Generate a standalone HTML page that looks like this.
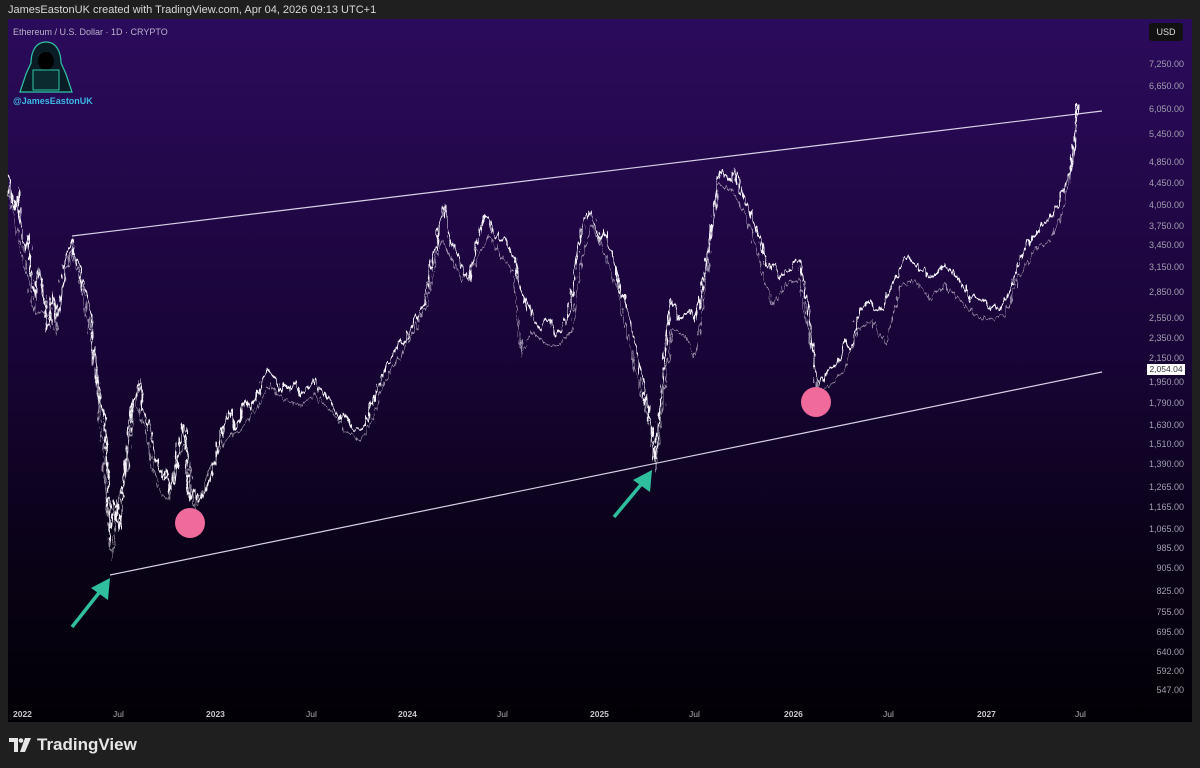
<!DOCTYPE html>
<html><head><meta charset="utf-8"><style>
html,body{margin:0;padding:0;width:1200px;height:768px;background:#1f1f1f;overflow:hidden;font-family:"Liberation Sans",sans-serif}
.hdr{position:absolute;left:8px;top:4px;font-size:11px;color:#d8d8d8}
.panel{position:absolute;left:8px;top:19px;width:1184px;height:703px;background:linear-gradient(180deg,#2b0b5c 0%,#220748 25%,#170434 50%,#0a0218 75%,#020005 100%)}
.t{position:absolute;font-size:9px;color:#b9b2c8}
.pl{position:absolute;right:8px;font-size:9px;color:#a39fb0;text-align:right;width:60px}
.xl{position:absolute;top:690px;font-size:8.5px;color:#b0b0b0}
.xl.b{font-weight:bold;color:#c8c8c8}
.foot{position:absolute;left:9px;top:735px;font-size:17px;color:#e6e6e6;font-weight:bold;display:flex;align-items:center;gap:6px}
</style></head><body>
<div class="hdr">JamesEastonUK created with TradingView.com, Apr 04, 2026 09:13 UTC+1</div>
<div class="panel">
<div class="t" style="left:5px;top:8px">Ethereum / U.S. Dollar · 1D · CRYPTO</div>
<svg style="position:absolute;left:8px;top:21px" width="60" height="56" viewBox="0 0 60 56">
<path d="M30 2 C19 2 15 13 15 23 L10 34 L4 52 L56 52 L50 34 L45 23 C45 13 41 2 30 2Z" fill="#0a1c26" stroke="#2fc7a8" stroke-width="1.2"/>
<ellipse cx="30" cy="21" rx="8" ry="9" fill="#000"/>
<rect x="17" y="30" width="26" height="20" fill="#0b2a30" stroke="#2fc7a8" stroke-width="1"/>
</svg>
<div style="position:absolute;left:5px;top:77px;font-size:9px;font-weight:bold;color:#3fb7e6">@JamesEastonUK</div>
<div style="position:absolute;left:1141px;top:4px;width:34px;height:18px;background:#111;border-radius:3px;color:#ddd;font-size:9px;line-height:18px;text-align:center">USD</div>
<div class="pl" style="top:40px">7,250.00</div><div class="pl" style="top:62px">6,650.00</div><div class="pl" style="top:85px">6,050.00</div><div class="pl" style="top:110px">5,450.00</div><div class="pl" style="top:138px">4,850.00</div><div class="pl" style="top:159px">4,450.00</div><div class="pl" style="top:181px">4,050.00</div><div class="pl" style="top:202px">3,750.00</div><div class="pl" style="top:221px">3,450.00</div><div class="pl" style="top:243px">3,150.00</div><div class="pl" style="top:268px">2,850.00</div><div class="pl" style="top:294px">2,550.00</div><div class="pl" style="top:314px">2,350.00</div><div class="pl" style="top:334px">2,150.00</div><div class="pl" style="top:358px">1,950.00</div><div class="pl" style="top:379px">1,790.00</div><div class="pl" style="top:401px">1,630.00</div><div class="pl" style="top:420px">1,510.00</div><div class="pl" style="top:440px">1,390.00</div><div class="pl" style="top:463px">1,265.00</div><div class="pl" style="top:483px">1,165.00</div><div class="pl" style="top:505px">1,065.00</div><div class="pl" style="top:524px">985.00</div><div class="pl" style="top:544px">905.00</div><div class="pl" style="top:567px">825.00</div><div class="pl" style="top:588px">755.00</div><div class="pl" style="top:608px">695.00</div><div class="pl" style="top:628px">640.00</div><div class="pl" style="top:647px">592.00</div><div class="pl" style="top:666px">547.00</div>
<div style="position:absolute;left:1139px;top:345px;width:38px;height:11px;background:#fff;color:#333;font-size:8.5px;line-height:11px;text-align:center">2,054.04</div>
<div class="xl b" style="left:5px">2022</div><div class="xl" style="left:105px">Jul</div><div class="xl b" style="left:198px">2023</div><div class="xl" style="left:298px">Jul</div><div class="xl b" style="left:390px">2024</div><div class="xl" style="left:489px">Jul</div><div class="xl b" style="left:582px">2025</div><div class="xl" style="left:681px">Jul</div><div class="xl b" style="left:776px">2026</div><div class="xl" style="left:875px">Jul</div><div class="xl b" style="left:969px">2027</div><div class="xl" style="left:1067px">Jul</div>
</div>
<svg style="position:absolute;left:0;top:0" width="1200" height="768">
<defs><filter id="j" x="-5%" y="-10%" width="110%" height="120%"><feTurbulence type="fractalNoise" baseFrequency="0.35 0.08" numOctaves="2" seed="3"/><feDisplacementMap in="SourceGraphic" scale="9" xChannelSelector="R" yChannelSelector="G"/></filter></defs>
<line x1="72" y1="236" x2="1102" y2="111" stroke="#d8d0e6" stroke-width="1.2"/>
<line x1="110" y1="575" x2="1102" y2="372" stroke="#d8d0e6" stroke-width="1.2"/>
<g fill="none" stroke="#f4f2f8" stroke-linejoin="round" filter="url(#j)">
<polyline stroke-width="1.6" points="8,175 12,200 15,210 18,190 22,240 25,250 28,235 32,280 35,300 38,270 40,275 44,300 47,330 50,320 53,290 56,320 60,300 63,280 65,260 68,250 72,240 75,255 80,270 84,290 88,300 90,310 93,350 95,360 98,380 100,400 103,410 105,420 108,480 110,540 113,510 115,500 118,520 120,530 123,490 125,470 128,440 130,420 134,400 137,390 140,380 143,410 147,420 150,430 154,450 157,460 160,470 164,480 167,470 170,490 174,480 177,460 180,440 183,425 185,430 188,480 190,500 194,490 197,500 200,500 205,490 210,480 215,460 220,440 225,420 230,410 235,430 240,420 245,400 250,410 255,400 260,390 265,375 270,370 275,380 280,390 285,385 290,390 295,380 300,395 305,390 310,385 315,380 320,390 325,395 330,400 335,410 340,420 345,415 350,425 355,430 360,430 365,425 370,410 375,395 380,380 385,370 390,360 395,350 400,340 405,345 410,330 415,320 420,310 425,300 430,270 435,250 440,220 443,205 445,210 448,230 450,240 455,250 460,260 465,275 470,280 475,250 480,230 485,215 490,220 495,235 500,240 505,238 510,250 515,260 520,290 525,300 530,310 535,320 540,330 545,320 550,320 555,335 560,330 565,320 570,310 575,270 580,240 585,220 590,210 595,225 600,240 605,230 610,250 615,265 620,290 625,300 630,320 635,340 640,370 643,380 645,400 648,410 650,420 653,440 655,460 658,430 660,410 663,380 665,350 668,320 670,300 675,305 680,320 685,315 690,310 695,320 700,300 705,270 710,240 715,200 720,170 725,175 730,180 735,170 740,190 745,200 750,210 755,225 760,240 765,260 770,270 775,265 780,280 785,270 790,270 795,260 800,260 805,290 810,320 813,350 815,370 818,380 820,385 825,375 830,370 835,365 840,360 845,340 850,350 855,330 860,310 865,305 870,300 875,310 880,310 885,300 890,290 895,280 900,270 905,255 910,260 915,265 920,270 925,270 930,280 935,275 940,270 945,265 950,270 955,275 960,280 965,290 970,300 975,295 980,300 985,300 990,310 995,305 1000,310 1005,300 1010,290 1015,275 1020,260 1025,250 1030,240 1035,235 1040,230 1045,220 1050,220 1055,210 1060,200 1065,185 1070,170 1073,150 1075,130 1077,110 1078,105"/>
<polyline stroke-width="1" opacity="0.6" points="8,190 15,225 25,265 35,315 45,310 55,335 65,275 72,250 82,290 92,345 100,410 108,520 112,560 118,500 125,480 135,395 145,430 158,490 168,500 178,455 186,445 195,510 210,470 225,440 240,430 255,410 270,385 285,400 300,405 315,395 330,410 345,430 360,440 372,420 385,380 400,355 415,330 428,300 440,240 450,255 462,280 475,265 488,235 500,255 512,270 522,355 532,330 545,345 560,345 572,330 582,255 592,225 605,255 618,290 630,345 642,395 650,430 656,470 664,395 672,330 685,335 695,360 705,285 718,185 732,190 745,215 758,255 772,305 785,285 800,280 812,350 818,395 830,385 845,370 858,330 872,320 886,345 900,285 915,280 930,300 945,285 960,300 975,315 990,320 1005,315 1020,275 1035,250 1050,240 1062,215 1072,165 1077,125"/>
</g>
<circle cx="190" cy="523" r="15" fill="#f06a9c"/>
<circle cx="816" cy="402" r="15" fill="#f06a9c"/>
<g fill="#2fbf9f">
<line x1="72" y1="627" x2="102" y2="589" stroke="#2fbf9f" stroke-width="3.5"/>
<polygon points="110,578 108,600 91,588"/>
<line x1="614" y1="517" x2="644" y2="481" stroke="#2fbf9f" stroke-width="3.5"/>
<polygon points="652,470 650,492 633,480"/>
</g>
</svg>
<div class="foot"><svg width="22" height="14" viewBox="0 0 22 14"><path d="M0 0H9V14H5V4H0Z" fill="#e6e6e6"/><circle cx="12" cy="2.5" r="2.3" fill="#e6e6e6"/><path d="M16 0H22L16 14H11Z" fill="#e6e6e6"/></svg><span>TradingView</span></div>
</body></html>
